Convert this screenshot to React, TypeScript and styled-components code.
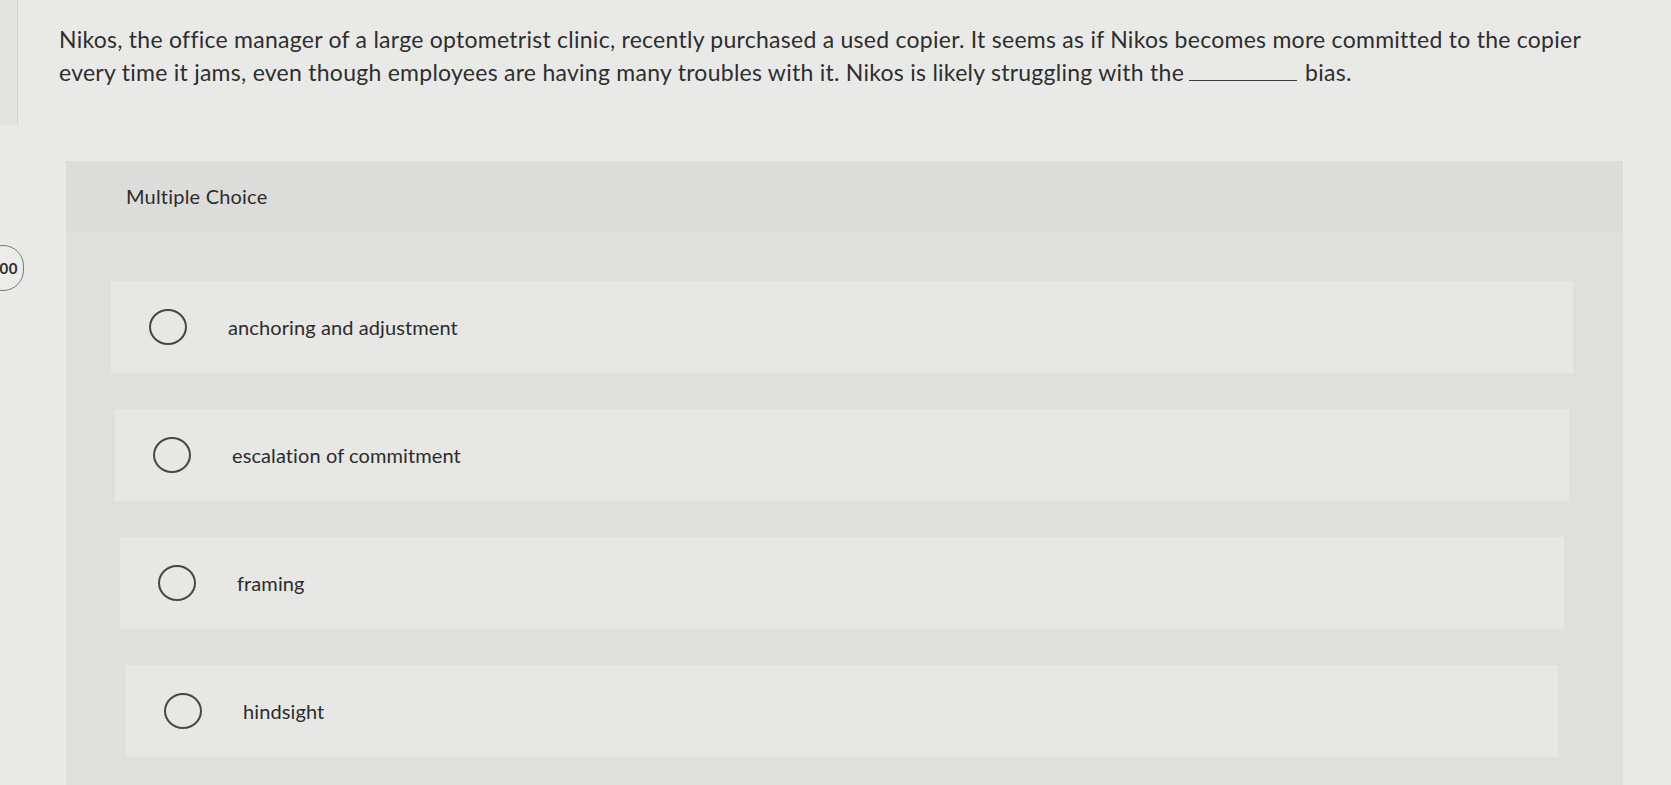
import React from "react";
import styled, { createGlobalStyle } from "styled-components";

const Global = createGlobalStyle`
  html, body { margin: 0; padding: 0; }
  body {
    background: #e9e9e7;
    font-family: Lato, "Open Sans", "Liberation Sans", sans-serif;
    color: #2c2c2c;
    overflow: hidden;
  }
`;

const Page = styled.div`
  display: flex;
  width: 1671px;
  height: 785px;
  overflow: hidden;
`;

const Rail = styled.div`
  width: 18px;
  flex: none;
  display: flex;
  flex-direction: column;
`;

const RailStrip = styled.div`
  height: 125px;
  background: #e4e4e2;
  border-right: 1px solid #d2d2d0;
`;

const Pill = styled.div`
  margin-top: 120px;
  margin-left: -18px;
  width: 42px;
  height: 46px;
  border: 1.5px solid #7a7a78;
  border-radius: 23px;
  background: #ececea;
  display: flex;
  align-items: center;
  justify-content: flex-end;
  padding-right: 5px;
  box-sizing: border-box;
  font-size: 15px;
  font-weight: 700;
  letter-spacing: 0.5px;
  color: #2c2c2c;
`;

const Main = styled.main`
  flex: 1;
  padding: 23px 0 0 41px;
  min-width: 0;
`;

const Question = styled.p`
  margin: 0;
  font-size: 23px;
  letter-spacing: 0.26px;
  line-height: 33px;
  color: #2e2e2e;
  width: 1545px;
`;

const Blank = styled.span`
  display: inline-block;
  width: 108px;
  height: 1px;
  border-bottom: 1.5px solid #3a3a3a;
  margin: 0 8px 0 5px;
  vertical-align: baseline;
`;

const Panel = styled.section`
  margin: 72px 0 0 7px;
  width: 1557px;
  background: #dfdfdd;
  padding-bottom: 40px;
`;

const PanelHeader = styled.div`
  height: 70px;
  display: flex;
  align-items: center;
  padding-left: 60px;
  background: #dcdcda;
  font-size: 20px;
  letter-spacing: 0.2px;
  color: #2c2c2c;
`;

const Options = styled.div`
  display: flex;
  flex-direction: column;
  gap: 36px;
  padding: 50px 50px 0 45px;
`;

const Card = styled.label<{ $indent: number }>`
  display: flex;
  align-items: center;
  height: 92px;
  margin-left: ${(p) => p.$indent}px;
  margin-right: ${(p) => p.$indent}px;
  padding-left: 38px;
  background: #e7e7e5;
  cursor: pointer;
`;

const Radio = styled.span`
  width: 38px;
  height: 36px;
  box-sizing: border-box;
  border: 2px solid #484846;
  border-radius: 50%;
  flex: none;
`;

const OptionText = styled.span`
  margin-left: 41px;
  font-size: 20px;
  letter-spacing: 0.1px;
  color: #2c2c2c;
`;

const options = [
  { text: "anchoring and adjustment", indent: 0 },
  { text: "escalation of commitment", indent: 4 },
  { text: "framing", indent: 9 },
  { text: "hindsight", indent: 15 },
];

export default function App() {
  return (
    <>
      <Global />
      <Page>
        <Rail>
          <RailStrip />
          <Pill>00</Pill>
        </Rail>
        <Main>
          <Question>
            Nikos, the office manager of a large optometrist clinic, recently purchased a used copier. It seems as if Nikos becomes more committed to the copier every time it jams, even though employees are having many troubles with it. Nikos is likely struggling with the
            <Blank />
            bias.
          </Question>
          <Panel>
            <PanelHeader>Multiple Choice</PanelHeader>
            <Options>
              {options.map((o) => (
                <Card key={o.text} $indent={o.indent}>
                  <Radio />
                  <OptionText>{o.text}</OptionText>
                </Card>
              ))}
            </Options>
          </Panel>
        </Main>
      </Page>
    </>
  );
}
